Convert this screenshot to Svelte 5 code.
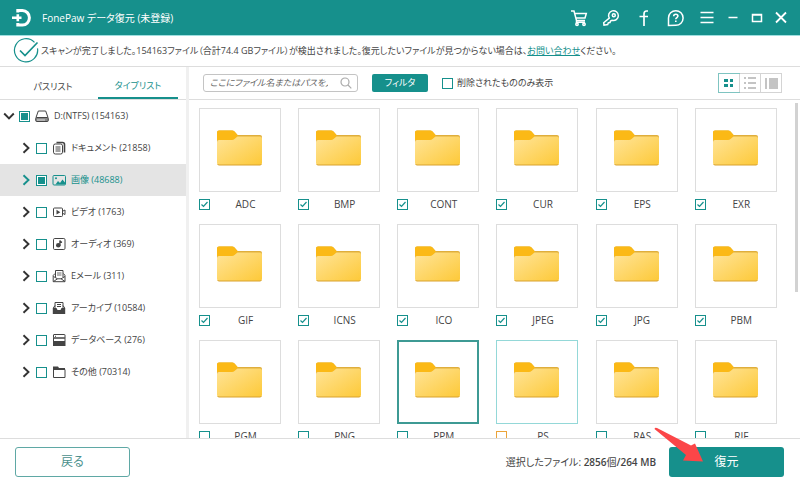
<script>
  const kinds = [
    { id: 'doc', name: 'ドキュメント', count: 21858 },
    { id: 'image', name: '画像', count: 48688, active: true },
    { id: 'video', name: 'ビデオ', count: 1763 },
    { id: 'audio', name: 'オーディオ', count: 369 },
    { id: 'mail', name: 'Eメール', count: 311 },
    { id: 'archive', name: 'アーカイブ', count: 10584 },
    { id: 'db', name: 'データベース', count: 276 },
    { id: 'other', name: 'その他', count: 70314 }
  ];

  let folders = $state(
    ['ADC', 'BMP', 'CONT', 'CUR', 'EPS', 'EXR', 'GIF', 'ICNS', 'ICO', 'JPEG', 'JPG', 'PBM', 'PGM', 'PNG', 'PPM', 'PS', 'RAS', 'RIF'].map(
      (name, i) => ({
        name,
        checked: i < 12,
        mark: name === 'PPM' ? 'selected' : name === 'PS' ? 'hovered' : ''
      })
    )
  );
</script>

{#snippet chevron(open)}
  <svg class="chevron" class:open viewBox="0 0 12 12" width="12" height="12" aria-hidden="true">
    <path d="M3.5 1.2 8.5 6l-5 4.8" fill="none" stroke="currentColor" stroke-width="1.9" />
  </svg>
{/snippet}

{#snippet kindIcon(id)}
  <svg class="kind" viewBox="0 0 14 14" width="14" height="14" fill="none" stroke="currentColor" aria-hidden="true">
    {#if id === 'doc'}
      <path d="M4.500 1.500h6q2 0 2 2v8" stroke-width="1.600" />
      <rect x="1.500" y="3" width="9" height="10" rx="1.800" />
      <path d="M3.500 6h5M3.500 8h5M3.500 10h5" />
    {:else if id === 'image'}
      <rect x="1" y="2.500" width="12.500" height="9.500" rx="1" />
      <path d="M3.500 11.500 6 8l2 2 2.500-3.500L13 9.500v2z" fill="currentColor" stroke="none" />
      <circle cx="4" cy="5.300" r="1" fill="currentColor" stroke="none" />
    {:else if id === 'video'}
      <rect x="1.500" y="3" width="9" height="8.500" rx="1" />
      <path d="M4.500 4.800 8.300 7.200l-3.800 2.400z" fill="currentColor" stroke="none" />
      <path d="M11 6l2-1v4.500l-2-1" />
    {:else if id === 'audio'}
      <rect x="1.500" y="1.500" width="11.500" height="11" rx="1.200" />
      <circle cx="6.300" cy="8.300" r="2.300" fill="currentColor" stroke="none" />
      <path d="M7.900 8.500V3.500c.3 1.300 1.200 1.600 2.100 2" stroke-width="1.300" />
    {:else if id === 'mail'}
      <path d="M3.500 8V1.500h7.500V8" />
      <path d="M5 4h4.500M5 6h4.500" stroke-width=".8" />
      <path d="M3 4.500 1.200 6.500v6.200h11.800V6.500L11.500 4.500" />
      <path d="M1.500 7.500 5.500 9.800h3.500l4-2.300M1.500 12.500l4-2.700M13 12.500 9 9.800" />
    {:else if id === 'archive'}
      <path d="M3 7V1.500h8V7" />
      <path d="M5 3.500h4M5 5.500h4" />
      <path d="M.800 7h3.700l1 2h3l1-2h3.700v6H.800z" fill="currentColor" stroke="none" />
      <path d="M3 4.500 1.300 7M11 4.500 12.700 7" />
    {:else if id === 'db'}
      <rect x="1.500" y="1.500" width="11.500" height="3.500" rx=".5" />
      <rect x="1.500" y="5" width="11.500" height="3.500" />
      <path d="M1 9h12.500v4H1z" fill="currentColor" stroke="none" />
      <path d="M3 3.300h1" />
    {:else}
      <path d="M1.500 12.500v-8h11.500v8z" />
      <path d="M1 1.500h5l1 1.500h6v2H1z" fill="currentColor" stroke="none" />
    {/if}
  </svg>
{/snippet}

<svelte:head><title>FonePaw データ復元</title></svelte:head>

<svg class="defs" width="0" height="0" aria-hidden="true">
  <linearGradient id="folder-front" x1="0" y1="0" x2="1" y2="1">
    <stop offset="0" stop-color="#ffe498" />
    <stop offset="1" stop-color="#fdc938" />
  </linearGradient>
</svg>

<div class="app">
  <header class="titlebar">
    <svg class="logo" viewBox="0 0 20 20" width="20" height="20" fill="none" stroke="#fff" stroke-width="3" aria-hidden="true">
      <path d="M5.800 4.500V2.500H10.500a6.900 7.300 0 0 1 0 14.600H5.800v-2" />
      <path d="M0 9.800h9.500M5.800 6.300v7" stroke-width="2.600" />
    </svg>
    <h1>FonePaw データ復元 (未登録)</h1>
    <div class="tools">
      <button aria-label="購入">
        <svg viewBox="0 0 18 18" width="18" height="18"><path d="M1 2h3l2.500 9.500h8.500M4.500 4.500h11.800L15 9H6M6.500 11.500v1.800h8.500" /><circle cx="7" cy="15.300" r="1.200" /><circle cx="14" cy="15.300" r="1.200" /></svg>
      </button>
      <button aria-label="登録">
        <svg viewBox="0 0 18 18" width="18" height="18"><path d="M7.300 9.200A4.900 4.900 0 1 1 10 11.300L8.500 12l-.5 1.500-1.700.3-.6 1.700-3.700.7-.3-2.500z" /><circle cx="11.800" cy="6.300" r="1.500" /></svg>
      </button>
      <button aria-label="Facebook">
        <svg viewBox="0 0 18 18" width="18" height="18"><path d="M14 2h-1.500Q10 2 10 5v12M5.500 7.500h8.500" stroke-width="1.700" /></svg>
      </button>
      <button aria-label="ヘルプ">
        <svg viewBox="0 0 18 18" width="18" height="18"><path d="M2.500 16.500V9a7.300 7.300 0 1 1 7.300 7.300z" /><path d="M7.700 7.300q0-2 2.100-2t2.100 1.800c0 1.500-2.100 1.500-2.100 3.200M9.800 11.500v1.600" stroke-width="1.600" /></svg>
      </button>
      <button aria-label="メニュー">
        <svg viewBox="0 0 18 18" width="18" height="18"><path d="M2.500 3.500h13M2.500 8.500h13M2.500 13.500h13" /></svg>
      </button>
      <button class="win" aria-label="最小化">
        <svg viewBox="0 0 14 14" width="14" height="14"><path d="M2.500 6.500h9" /></svg>
      </button>
      <button class="win" aria-label="最大化">
        <svg viewBox="0 0 14 14" width="14" height="14"><path d="M2.500 3.500h9v7h-9zM2.500 4h9" /></svg>
      </button>
      <button class="win" aria-label="閉じる">
        <svg viewBox="0 0 14 14" width="14" height="14"><path d="m2 1.500 10 10M12 1.500l-10 10" stroke-width="1.800" /></svg>
      </button>
    </div>
  </header>

  <div class="message">
    <svg viewBox="0 0 26 26" width="26" height="26" fill="none" stroke="#16908c" aria-hidden="true">
      <path d="M21.500 4.300a11.600 11.600 0 1 0 3 6" stroke-width="1.200" />
      <path d="m7 12.500 5 5L24.500 4.500" stroke-width="1.700" />
    </svg>
    <p>スキャンが完了しました。154163ファイル（合計74.4 GBファイル）が検出されました。復元したいファイルが見つからない場合は、<a href="#contact">お問い合わせ</a>ください。</p>
  </div>

  <div class="body">
    <aside>
      <div class="tabs" role="tablist">
        <button role="tab" aria-selected="false">パスリスト</button>
        <button role="tab" aria-selected="true" class="on">タイプリスト</button>
      </div>
      <div class="tree">
        <div class="row root">
          {@render chevron(true)}
          <label>
            <input type="checkbox" class="box partial" />
            <svg class="kind" viewBox="0 0 14 14" width="14" height="14" fill="none" stroke="currentColor" aria-hidden="true">
              <path d="M1 8.500 3.300 2h7.400L13 8.500" />
              <rect x=".700" y="8.500" width="12.600" height="4" rx="1" fill="#8a8a8a" />
              <path d="M2 11h8" stroke="#ddd" />
            </svg>
            <span>D:(NTFS) (154163)</span>
          </label>
        </div>
        {#each kinds as k (k.id)}
          <div class="row" class:active={k.active}>
            {@render chevron(false)}
            <label>
              <input type="checkbox" class="box" class:partial={k.active} />
              {@render kindIcon(k.id)}
              <span>{k.name} ({k.count})</span>
            </label>
          </div>
        {/each}
      </div>
    </aside>

    <main>
      <div class="toolbar">
        <div class="search">
          <input type="text" aria-label="検索" placeholder="ここにファイル名またはパスを入力" />
          <svg viewBox="0 0 12 12" width="12" height="12" fill="none" stroke="#aaa" stroke-width="1.200" aria-hidden="true"><circle cx="5" cy="5" r="4" /><path d="m8 8 3.300 3.300" /></svg>
        </div>
        <button class="filter">フィルタ</button>
        <label class="deleted"><input type="checkbox" class="box" />削除されたもののみ表示</label>
        <div class="views">
          <button class="on" aria-label="グリッド表示">
            <svg viewBox="0 0 20 18" width="20" height="18" fill="#16908c"><path d="M5 5h4v3H5zM11 5h3v3h-3zM5 10h4v3H5zM11 10h3v3h-3z" /></svg>
          </button>
          <button aria-label="リスト表示">
            <svg viewBox="0 0 20 18" width="20" height="18" fill="#c4c4c4"><path d="M4 3h2v2H4zM8 3h8v2H8zM4 8h2v2H4zM8 8h8v2H8zM4 13h2v2H4zM8 13h8v2H8z" /></svg>
          </button>
          <button aria-label="プレビュー表示">
            <svg viewBox="0 0 20 18" width="20" height="18" fill="#c4c4c4"><path d="M4 4h2v11H4zM8 4h9v11H8z" /></svg>
          </button>
        </div>
      </div>

      <div class="content">
        <div class="files">
          {#each folders as f (f.name)}
            <label class="file">
              <span class="thumb {f.mark}">
                <svg viewBox="0 0 46 36" width="46" height="36" aria-hidden="true">
                  <path d="M0 11V2.500Q0 .500 2 .500h13q1.500 0 2.500 1l3 3.500H43q2 0 2 2v6H0z" fill="#dfae3c" />
                  <path d="M0 12V2.500Q0 .500 2 .500h13q1.500 0 2.500 1l3.500 4-3 3.500q-1 1-2.500 1H0z" fill="#fbb916" />
                  <path d="M0 12q0-2 2-2h13q1.500 0 2.500-1l3-2.500H43q2 0 2 2v24.500q0 2-2 2H2q-2 0-2-2z" fill="url(#folder-front)" />
                  <path d="M.500 34q.500 1 1.500 1h41q1 0 1.500-1" fill="none" stroke="#d9a22e" />
                </svg>
              </span>
              <span class="caption">
                <input type="checkbox" class="box" class:warn={f.mark === 'hovered'} bind:checked={f.checked} />
                <span>{f.name}</span>
              </span>
            </label>
          {/each}
        </div>
        <div class="scrollbar"></div>
      </div>
    </main>
  </div>

  <footer>
    <button class="back">戻る</button>
    <p>選択したファイル: <b>2856</b>個<b>/264 MB</b></p>
    <div class="recover-wrap">
      <button class="recover">復元</button>
      <svg class="arrow" viewBox="0 0 50 36" width="50" height="36" aria-hidden="true">
        <path d="M.500 2Q1 0 3 1L37 18.500 41 16.500 49 34.500 29 33.500 32 28z" fill="#fb4648" />
      </svg>
    </div>
  </footer>
</div>

<style>
  :global(body) {
    background: #fff;
  }
  .app {
    --teal: #16908c;
    display: flex;
    flex-direction: column;
    height: 100vh;
    overflow: hidden;
    color: #444;
    font: 9px/16px 'Open Sans', 'Noto Sans CJK JP', sans-serif;
    font-feature-settings: 'palt';
  }
  .app * {
    box-sizing: border-box;
  }
  .defs {
    position: absolute;
  }
  button,
  input {
    font: inherit;
    font-feature-settings: inherit;
    color: inherit;
    margin: 0;
    padding: 0;
    border: 0;
    background: none;
  }
  svg {
    display: block;
    flex: none;
  }
  p,
  h1 {
    margin: 0;
    white-space: nowrap;
  }
  .titlebar {
    display: flex;
    align-items: center;
    flex: none;
    height: 36px;
    padding: 0 12px;
    background: var(--teal);
    border-bottom: 1px solid #9fdfe0;
    color: #fff;
  }
  h1 {
    margin-left: 10px;
    font-size: 10px;
    font-weight: 400;
  }
  .tools {
    display: flex;
    align-items: center;
    gap: 14px;
    margin-left: auto;
  }
  .tools svg {
    fill: none;
    stroke: #fff;
    stroke-width: 1.5;
  }
  .tools .win {
    margin-left: -4px;
  }
  .message {
    display: flex;
    align-items: center;
    flex: none;
    height: 31px;
    padding-left: 13px;
    gap: 2px;
    border-bottom: 1px solid #ddd;
  }
  a {
    color: var(--teal);
  }
  .body {
    display: flex;
    flex: 1;
    min-height: 0;
  }
  aside {
    flex: none;
    width: 189px;
    border-right: 3px solid #f0f0f0;
  }
  .tabs {
    display: flex;
    height: 33px;
    padding: 0 8px;
    border-bottom: 1px solid #ddd;
  }
  .tabs button {
    flex: 1;
    padding-top: 8px;
  }
  .tabs .on {
    flex: none;
    width: 80px;
    color: var(--teal);
    border-bottom: 2px solid var(--teal);
  }
  .row {
    display: flex;
    align-items: center;
    height: 32px;
    padding-left: 20px;
    gap: 4px;
  }
  .row.root {
    padding-left: 3px;
  }
  .row.active {
    background: #e4e4e4;
    color: var(--teal);
  }
  .row label {
    display: flex;
    align-items: center;
    gap: 5px;
    white-space: nowrap;
  }
  .chevron {
    color: #333;
  }
  .active .chevron {
    color: inherit;
  }
  .chevron.open {
    transform: rotate(90deg);
  }
  .box {
    appearance: none;
    flex: none;
    width: 11px;
    height: 11px;
    border: 1px solid var(--teal);
    background: #fff center / 9px 9px no-repeat;
  }
  .box:checked {
    background-image: url("data:image/svg+xml,%3Csvg xmlns='http://www.w3.org/2000/svg' viewBox='0 0 9 9'%3E%3Cpath d='M1.500 4.500l2 2L7.500 2' fill='none' stroke='%2316908c' stroke-width='1.200'/%3E%3C/svg%3E");
  }
  .box.partial {
    background: var(--teal);
    box-shadow: inset 0 0 0 1px #fff;
  }
  .box.warn {
    border-color: #eba43a;
  }
  main {
    display: flex;
    flex-direction: column;
    flex: 1;
    min-width: 0;
  }
  .toolbar {
    display: flex;
    align-items: center;
    flex: none;
    height: 33px;
    padding: 0 18px 0 14px;
    border-bottom: 1px solid #ddd;
  }
  .search {
    display: flex;
    align-items: center;
    width: 155px;
    height: 18px;
    padding: 0 5px 0 6px;
    border: 1px solid #c4c4c4;
    border-radius: 3px;
  }
  .search input {
    flex: 1;
    min-width: 0;
    margin-right: 12px;
    outline: 0;
    font-style: italic;
  }
  .search input::placeholder {
    color: #666;
    opacity: 1;
  }
  .filter {
    width: 56px;
    height: 18px;
    margin: 0 14px;
    border-radius: 2px;
    background: var(--teal);
    color: #fff;
  }
  .deleted {
    display: flex;
    align-items: center;
    gap: 4px;
  }
  .views {
    display: flex;
    margin-left: auto;
    border: 1px solid #d4d4d4;
  }
  .views button + button {
    border-left: 1px solid #d4d4d4;
  }
  .views .on {
    outline: 1px solid #7fc4c1;
  }
  .content {
    display: flex;
    flex: 1;
    min-height: 0;
  }
  .files {
    display: grid;
    grid-template-columns: repeat(auto-fill, minmax(99px, 1fr));
    grid-auto-rows: 116px;
    flex: 1;
    min-width: 0;
    padding: 8px 0 0 10px;
    overflow: hidden;
  }
  .scrollbar {
    width: 3px;
    height: 56%;
    margin: 3px 2px 0 1px;
    background: #d2d2d2;
  }
  .thumb {
    display: flex;
    align-items: center;
    justify-content: center;
    width: 82px;
    height: 84px;
    padding-bottom: 4px;
    border: 1px solid #ddd;
  }
  .thumb.selected {
    border: 2px solid #3d9a94;
  }
  .thumb.hovered {
    border-color: #94d8d8;
  }
  .caption {
    display: flex;
    align-items: center;
    width: 82px;
    height: 24px;
    font-size: 10px;
  }
  .caption span {
    flex: 1;
    text-align: center;
  }
  footer {
    display: flex;
    align-items: center;
    flex: none;
    height: 51px;
    padding: 0 16px 4px 15px;
    border-top: 1px solid #ddd;
  }
  footer p {
    margin: 0 13px 0 auto;
    font-size: 10px;
  }
  footer b {
    font-weight: 600;
  }
  .back,
  .recover {
    width: 115px;
    height: 30px;
    border-radius: 3px;
    font-size: 12px;
  }
  .back {
    border: 1px solid #5fa8a5;
    color: #4a8f8c;
  }
  .recover-wrap {
    position: relative;
  }
  .recover {
    background: var(--teal);
    color: #fff;
  }
  .arrow {
    position: absolute;
    left: -15px;
    top: -20px;
  }
</style>
